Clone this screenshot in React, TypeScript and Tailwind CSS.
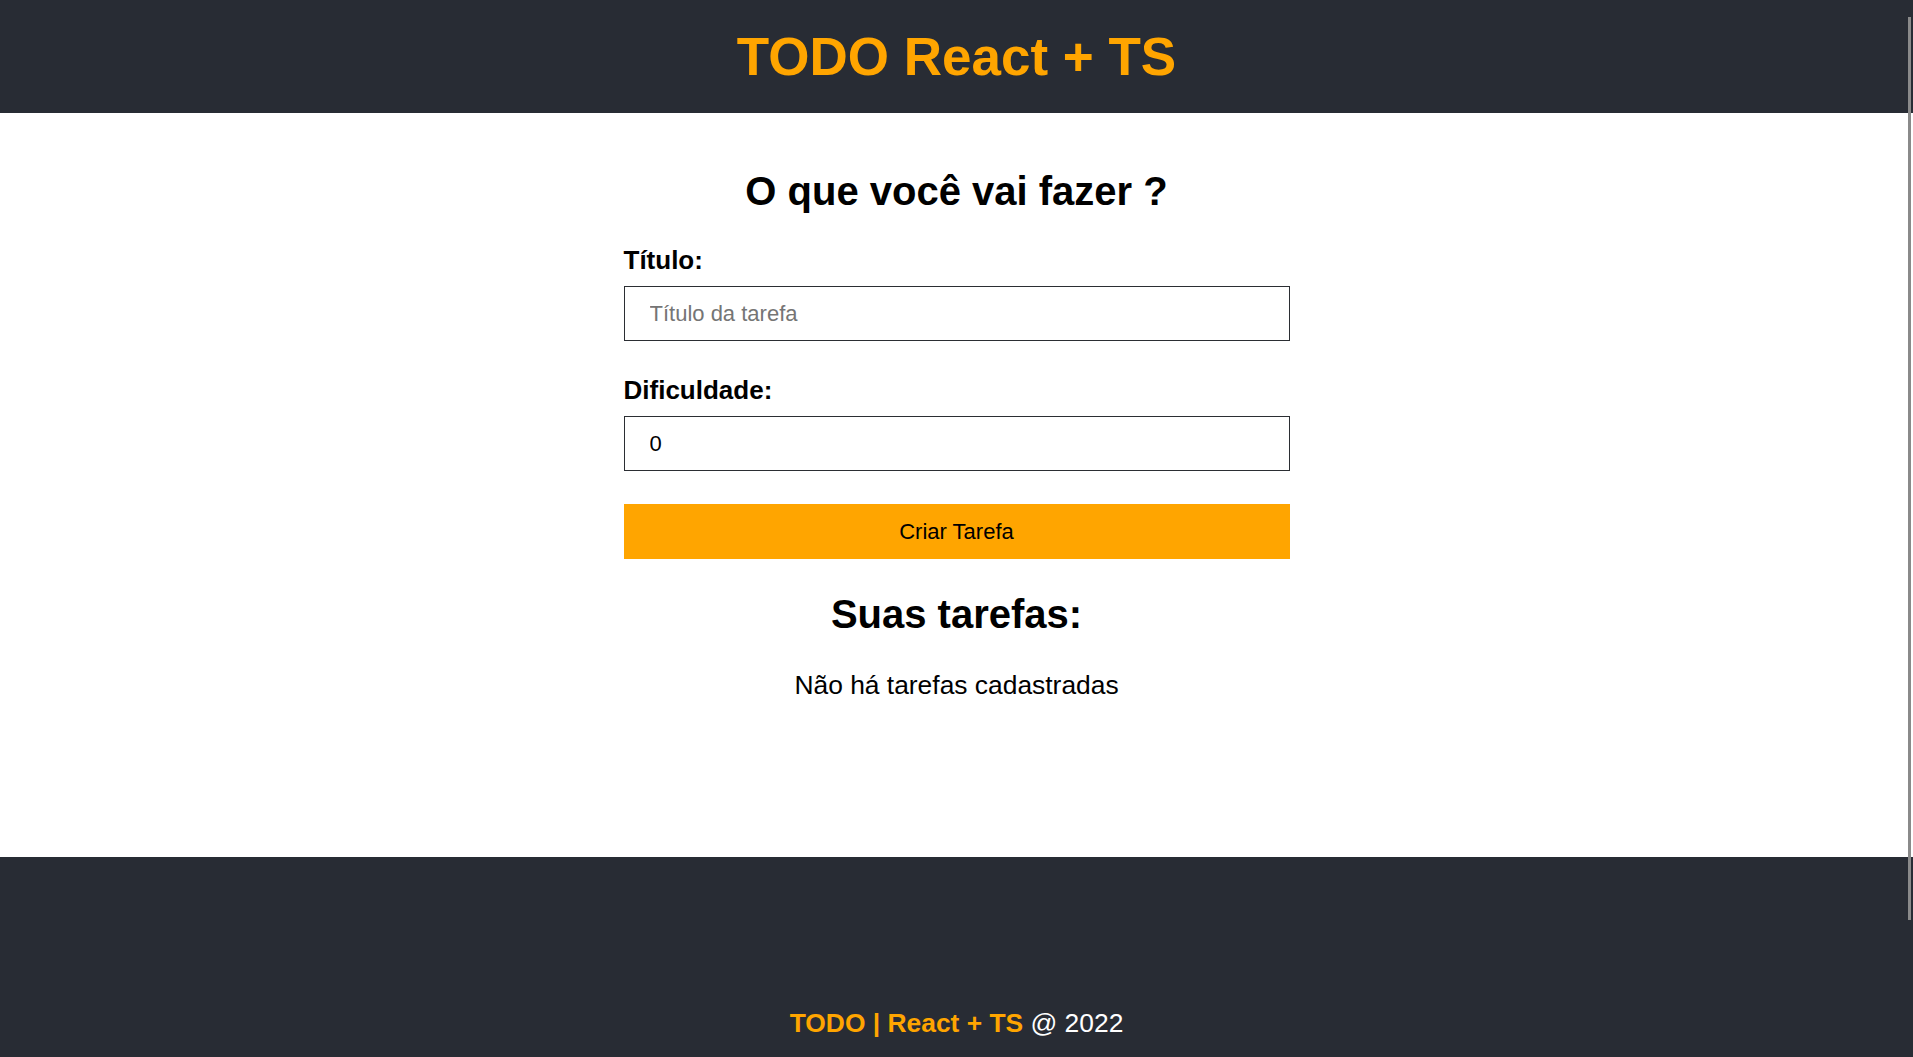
import { useState } from "react";

function App() {
  const [title, setTitle] = useState("");
  const [difficulty, setDifficulty] = useState("0");

  return (
    <div className="relative h-[1057px] overflow-hidden bg-white font-['Liberation_Sans',Arial,sans-serif] text-black">

      {/* HEADER */}
      <header className="h-[113px] bg-[#282c34] flex items-center justify-center">
        <h1 className="text-[53px] leading-none font-bold text-[#ffa500]">TODO React + TS</h1>
      </header>

      {/* MAIN */}
      <main className="w-[666px] mx-auto pt-[58px] pb-[159px]">
        <h2 className="text-[40px] leading-none font-bold text-center">O que você vai fazer ?</h2>

        <form className="flex flex-col" onSubmit={(e) => e.preventDefault()}>
          <label htmlFor="title" className="mt-[36px] text-[26px] leading-none font-bold">Título:</label>
          <input
            id="title"
            type="text"
            placeholder="Título da tarefa"
            value={title}
            onChange={(e) => setTitle(e.target.value)}
            className="mt-[13px] h-[55px] border border-[#2b2e33] px-[25px] text-[22px] outline-none placeholder:text-[#757575]"
          />

          <label htmlFor="difficulty" className="mt-[36px] text-[26px] leading-none font-bold">Dificuldade:</label>
          <input
            id="difficulty"
            type="text"
            inputMode="numeric"
            value={difficulty}
            onChange={(e) => setDifficulty(e.target.value)}
            className="mt-[13px] h-[55px] border border-[#2b2e33] px-[25px] text-[22px] outline-none"
          />

          <button type="submit" className="mt-[33px] h-[55px] bg-[#ffa500] text-[22px] text-black">
            Criar Tarefa
          </button>
        </form>

        <h2 className="mt-[35px] text-[40px] leading-none font-bold text-center">Suas tarefas:</h2>
        <p className="mt-[38px] text-[26.4px] leading-none text-center">Não há tarefas cadastradas</p>
      </main>

      {/* FOOTER */}
      <footer className="h-[340px] bg-[#282c34] pt-[153px] text-center text-[26.4px] leading-none">
        <span className="font-bold text-[#ffa500]">TODO | React + TS</span>
        <span className="text-white"> @ 2022</span>
      </footer>

      {/* OVERLAY SCROLL THUMB */}
      <div className="absolute left-[1908px] top-[17px] w-[3px] h-[903px] bg-[#8a8a8a]" />
    </div>
  );
}

export default App;
